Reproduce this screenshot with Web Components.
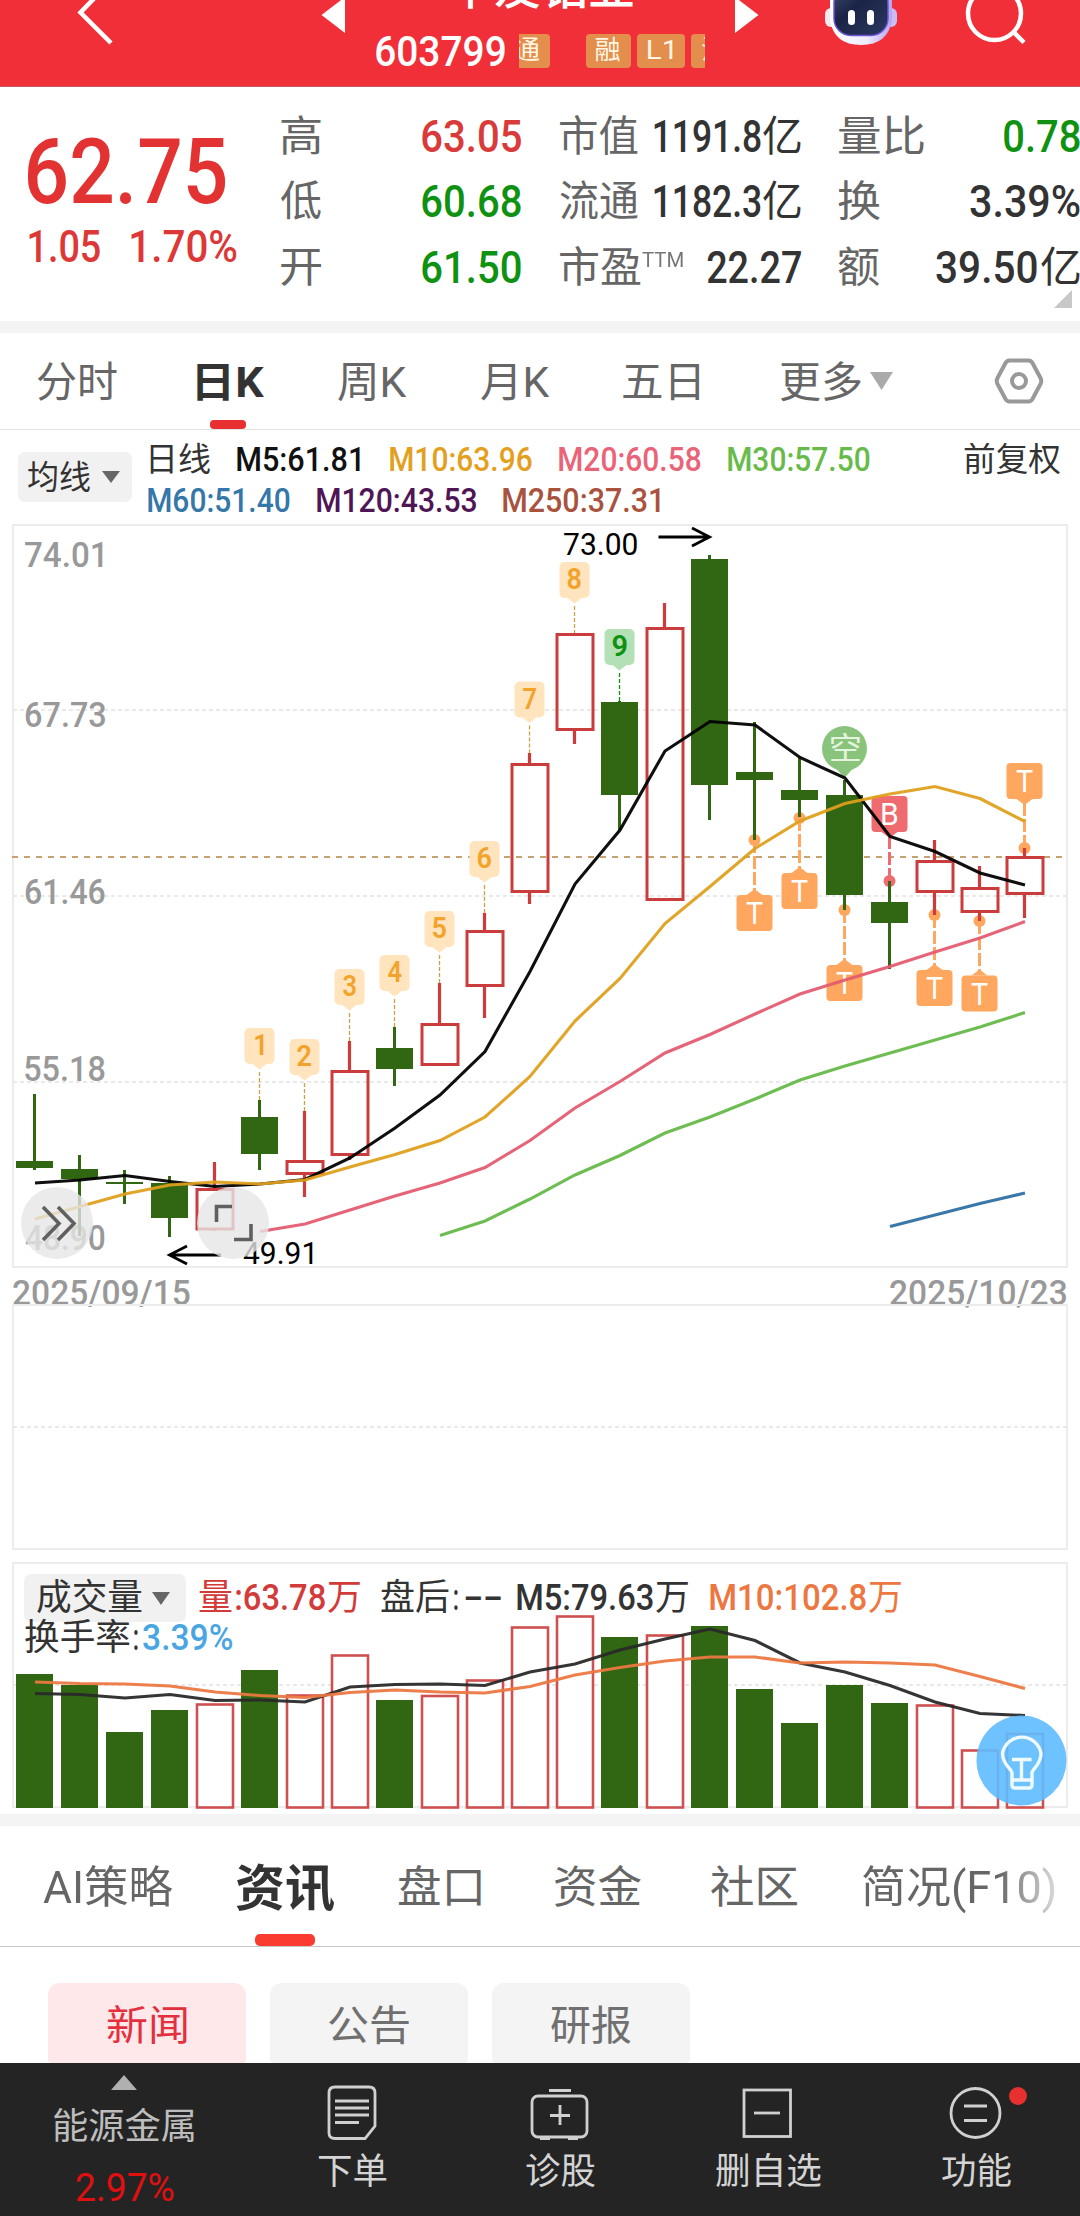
<!DOCTYPE html>
<html lang="zh-CN">
<head>
<meta charset="utf-8">
<title>603799</title>
<style>
html,body{margin:0;padding:0;background:#fff}
body{width:1080px;height:2216px;overflow:hidden;font-family:Roboto,"Noto Sans CJK SC",sans-serif;color:#333}
</style>
</head>
<body>
<stock-app></stock-app>
<script>
const FAMILY = 'Roboto,"Noto Sans CJK SC",sans-serif';
const ctx = document.createElement('canvas').getContext('2d');
function ink(text, weight, size) {
  ctx.font = `${weight} ${size}px ${FAMILY}`;
  const m = ctx.measureText(text);
  return { left: -m.actualBoundingBoxLeft, width: m.actualBoundingBoxLeft + m.actualBoundingBoxRight };
}
class Base extends HTMLElement {
  constructor() { super(); this.attachShadow({ mode: 'open' }); }
  connectedCallback() {
    this.shadowRoot.innerHTML = `<style>:host{display:block;box-sizing:border-box}*{box-sizing:border-box}.r{display:flex;align-items:center}svg{display:block}${this.css ? this.css() : ''}</style>${this.html()}`;
  }
}
/* One line of text whose visible glyphs fill exactly w pixels. */
class FitText extends HTMLElement {
  constructor() {
    super();
    this.attachShadow({ mode: 'open' }).innerHTML = '<style>:host{display:block;flex:none;white-space:nowrap}span{display:inline-block;transform-origin:0 50%}</style><span><slot></slot></span>';
  }
  connectedCallback() {
    const cs = getComputedStyle(this), w = +this.getAttribute('w');
    const b = ink(this.textContent, cs.fontWeight, parseFloat(cs.fontSize));
    const k = w / b.width;
    this.style.width = w + 'px';
    this.shadowRoot.querySelector('span').style.transform = `translateX(${-b.left * k}px) scaleX(${k})`;
  }
}
customElements.define('fit-text', FitText);
const f = (t, w, ml = 0, c = '', extra = '') => `<fit-text w="${w}" class="${c}" style="margin-left:${ml}px;${extra}">${t}</fit-text>`;
/* SVG text between x1 and x2 on the given baseline. */
function st(t, x1, x2, y, size, fill, weight = 400) {
  const b = ink(t, weight, size), k = (x2 - x1) / b.width;
  return `<text transform="translate(${x1 - b.left * k} ${y}) scale(${k} 1)" font-size="${size}" font-weight="${weight}" fill="${fill}" style="white-space:pre">${t}</text>`;
}

customElements.define('stock-header', class extends Base {
  css() { return `:host{height:87px;background:#f12f38;overflow:hidden;color:#fff;border-bottom:1px solid #c8585e}
    .bar{display:grid;grid-template-columns:320px 446px 314px;height:87px}
    .mid{display:grid;grid-template-columns:26px 389px 31px}
    .name{font-size:46px;line-height:46px;font-weight:500;height:34px;overflow:hidden;padding-left:102px}
    .name fit-text{margin-top:-35px}
    .code{font-size:42px;line-height:36px;font-weight:500;height:34px}
    .tags{display:flex;width:186px;height:34px;overflow:hidden;margin-left:14px}
    .tag{flex:none;background:#e38e4d;color:#fff6e4;border-radius:4px;font-size:26px;line-height:32px;display:flex;justify-content:center}`; }
  html() { return `<div class="bar">
    <svg width="320" height="87"><path d="M111 43L80.5 12.5L110-18" fill="none" stroke="#fff" stroke-width="4.5"/></svg>
    <div class="mid"><svg width="26" height="40"><path d="M1.5 15L25-3V33Z" fill="#fff"/></svg>
      <div><div class="name">${f('华友钴业', 185)}</div>
      <div class="r" style="padding-left:30px"><div class="code">${f('603799', 129)}</div>
      <div class="tags"><div class="tag" style="width:45px;margin-left:-14.5px">${f('通', 26)}</div><div class="tag" style="width:45px;margin-left:36px">${f('融', 25)}</div><div class="tag" style="width:48px;margin-left:6px">${f('L1', 25)}</div><div class="tag" style="width:45px;margin-left:6px">${f('沪', 25)}</div></div></div></div>
      <svg width="26" height="40"><path d="M0-3V33L23.5 15Z" fill="#fff"/></svg></div>
    <svg width="314" height="87" viewBox="766 0 314 87">
      <defs><linearGradient id="g" x1="0" x2="1"><stop offset="0" stop-color="#fff"/><stop offset=".6" stop-color="#eeebfb"/><stop offset="1" stop-color="#b5a5ef"/></linearGradient>
      <linearGradient id="v" x1="0" x2="1" y1="0" y2="1"><stop offset="0" stop-color="#3d4a6b"/><stop offset=".4" stop-color="#1a2446"/><stop offset="1" stop-color="#2b3860"/></linearGradient></defs>
      <rect x="825" y="8" width="14" height="19" rx="6" fill="#f7e9ef"/><rect x="883" y="8" width="14" height="19" rx="6" fill="#c9bdf2"/>
      <path d="M830-6V20Q834 45 861 45Q888 45 892 20V-6Z" fill="url(#g)"/>
      <rect x="834" y="-14" width="54" height="49.5" rx="17" fill="url(#v)" stroke="#6d54d6" stroke-width="1.5"/>
      <rect x="848" y="10" width="7" height="15" rx="3.5" fill="#fff"/><rect x="867" y="10" width="7" height="15" rx="3.5" fill="#fff"/>
      <circle cx="994.500" cy="13.500" r="26.500" fill="none" stroke="#fff" stroke-width="4.500"/><path d="M1013 31.500L1024 42.500" stroke="#fff" stroke-width="4.500"/>
    </svg></div>`; }
});

customElements.define('quote-panel', class extends Base {
  css() { return `:host{height:246px;border-bottom:12px solid #f4f4f4;overflow:hidden}
    .g{display:grid;grid-template-columns:280px 241px 280px 279px;height:234px}
    .c{padding-top:17px}.p{padding:39px 0 0 28px;color:#e33232}
    .c .r{height:65.5px;font-size:45px;line-height:60px;font-weight:500}
    .c .r span{flex:1}.l{font-size:42px;font-weight:400;color:#666}
    .red{color:#d93a3a}.gr{color:#0f9111}.t{font-size:21px;font-weight:400;color:#777;position:relative;top:-8px}`; }
  html() { const row = (l, lw, v, cls, ml, m = '') => `<div class="r">${f(l, lw, ml, 'l')}${m}<span></span>${v.map((x, i) => f(x[0], x[1], i ? (x[3] || 2) : 0, cls, x[2] || '')).join('')}</div>`;
    const yi = ['亿', 38, 'font-size:42px;font-weight:400'];
    return `<div class="g"><div class="p"><div style="font-size:91px;line-height:92px;font-weight:500">${f('62.75', 198)}</div><div class="r" style="font-size:45px;line-height:50px;font-weight:500;padding-top:3px;margin-top:1px;color:#dc3838">${f('1.05', 71, 1)}${f('1.70%', 106, 31)}</div></div>
    <div class="c">${row('高', 40, [['63.05', 99]], 'red', 1)}${row('低', 41, [['60.68', 99]], 'gr', 0)}${row('开', 40, [['61.50', 99]], 'gr', 1)}</div>
    <div class="c">${row('市值', 78, [['1191.8', 107], yi], 'd', 39)}${row('流通', 78, [['1182.3', 107], yi], 'd', 39)}${row('市盈', 81, [['22.27', 94]], 'd', 39, f('TTM', 41, 1, 't'))}</div>
    <div class="c">${row('量比', 86, [['0.78', 76]], 'gr', 37)}${row('换', 42, [['3.39%', 110]], 'd', 37)}${row('额', 41, [['39.50', 101], ['亿', 39, 'font-size:42px;font-weight:400', 4]], 'd', 37)}<svg width="18" height="18" style="margin:-11px 0 0 253px"><path d="M18 0V18H0Z" fill="#c8c8c8"/></svg></div></div>`; }
});

customElements.define('period-tabs', class extends Base {
  css() { return `:host{height:97px;border-bottom:1px solid #e4e4e4;font-size:42px;line-height:60px;color:#666}
   .r{height:96px}.r>fit-text{padding-top:3px}.on{font-weight:700;color:#333}.tab{display:flex;flex-direction:column;align-items:center;padding-top:20px;height:96px;margin-left:80px}i{width:36px;height:9px;border-radius:4px;background:#e83030;margin:7px 6px 0 0}`; }
  html() { return `<div class="r">${f('分时', 80, 37)}<div class="tab">${f('日K', 67, 0, 'on')}<i></i></div>${f('周K', 69, 74)}${f('月K', 69, 74)}${f('五日', 76, 73)}${f('更多', 81, 81)}
   <svg width="24" height="19" style="margin-left:9px"><path d="M0 0H23L11.500 18Z" fill="#aaa"/></svg>
   <svg width="52" height="50" viewBox="-26 -25 52 50" style="margin-left:99px" fill="none" stroke="#999" stroke-width="4"><path d="M-9.500-20.500H9.500Q12-20.500 13.500-18L21.500-3Q23 0 21.500 3L13.500 18Q12 20.500 9.500 20.500H-9.500Q-12 20.500-13.500 18L-21.500 3Q-23 0-21.500-3L-13.500-18Q-12-20.500-9.500-20.500Z"/><circle r="7"/></svg></div>`; }
});

customElements.define('ma-legend', class extends Base {
  css() { return `:host{height:94px;display:flex;align-items:flex-start;font-size:33px;line-height:41px;font-weight:500;padding-left:18px}
   .b{width:114px;height:50px;margin-top:22px;border-radius:7px;background:#f1f1f1;padding-left:10px}.n{font-weight:400}.q{padding-top:9px}`; }
  html() { return `<div class="b r">${f('均线', 62, 0, 'n')}<svg width="18" height="12" style="margin-left:12px"><path d="M0 0H18L9 12Z" fill="#666"/></svg></div>
   <div class="q"><div class="r">${f('日线', 60, 18, 'n')}${f('M5:61.81', 123, 27, '', 'color:#111')}${f('M10:63.96', 142, 30, '', 'color:#e3a01e')}${f('M20:60.58', 142, 27, '', 'color:#ea6478')}${f('M30:57.50', 142, 27, '', 'color:#68bb4a')}${f('前复权', 96, 94, 'n')}</div>
   <div class="r">${f('M60:51.40', 142, 16, '', 'color:#3477a8')}${f('M120:43.53', 159, 27, '', 'color:#4f1555')}${f('M250:37.31', 157, 27, '', 'color:#a9523e')}</div></div>`; }
});

const cx = i => 34.5 + 45 * i;
const line = (pts, start, color) => `<polyline fill="none" stroke="${color}" stroke-width="3.100" stroke-opacity=".94" points="${pts.map((y, i) => (35 + 45 * (i + start)) + ',' + y).join(' ')}"/>`;
const GREEN = '#316712', RED = '#cb3d3d';

customElements.define('candle-chart', class extends Base {
  css() { return `:host{height:781px}svg{overflow:visible}`; }
  html() {
    const K = [[0,1094,1161,1168,1170],[0,1155,1169,1179,1236],[0,1170,1182,1184,1204],[0,1176,1183,1218,1237],[1,1162,1189.5,1229,1231],[0,1100,1117,1154,1170],[1,1111,1161.5,1173.5,1197],[1,1041,1071.5,1154.5,1160],[0,1027,1048,1069,1086],[1,983,1024.5,1064.5,1064],[1,913,931.5,985.5,1018],[1,753,764.5,891.5,904],[1,634,634.5,729.5,744],[0,701,702,795,830],[1,603,628.5,899.5,899],[0,555,559,785,820],[0,722,772,780,840],[0,758,790,800,817],[0,780,795,895,910],[0,881,902,923,969],[1,840,861.5,891.5,915],[1,866,888.5,911.5,921],[1,848,857.5,893.5,918]];
    let s = '';
    for (const y of [710, 896, 1082]) s += `<path d="M13 ${y}H1067" stroke="#e9e9e9" stroke-width="2" stroke-dasharray="4 3"/>`;
    s += `<path d="M13 525H1067V1267H13Z" fill="none" stroke="#ececec" stroke-width="2"/>`;
    [['74.01', 567], ['67.73', 727], ['61.46', 904], ['55.18', 1081], ['48.90', 1250]].forEach((a, i) => s += st(a[0], 25, i ? 105 : 103, a[1], 35, '#999', 500));
    s += st('2025/09/15', 13, 190, 1305, 35, '#999', 500) + st('2025/10/23', 890, 1066, 1305, 35, '#999', 500);
    s += `<path d="M12 857H1064" stroke="#c6a273" stroke-width="2" stroke-dasharray="6 6"/>`;
    // sequence numbers above the highs
    [[5,1028],[6,1039],[7,969],[8,955],[9,911],[10,841],[11,681.5],[12,562],[13,629]].forEach(([i, y], n) => {
      const g = n === 8, x = cx(i), d = String(n + 1), w = d === '1' ? 9 : 14;
      s += `<path d="M${x} ${y + 44}V${K[i][1]}" stroke="${g ? '#0f9111' : '#c9a24a'}" stroke-width="1.300" stroke-dasharray="4 2"/><rect x="${x - 15}" y="${y}" width="30" height="36" rx="5" fill="${g ? '#b3e0b4' : '#ffe4bd'}"/><path d="M${x - 7} ${y + 36}h14l-7 5.500z" fill="${g ? '#b3e0b4' : '#ffe4bd'}"/>` + st(d, x - w / 2, x + w / 2, y + 27, 29, g ? '#0f9111' : '#f3a32b', 600);
    });
    // trade flags: index, box top, dot y, label
    [[16,895,840],[17,873,818],[18,965,910],[20,970,915],[21,975.5,921],[22,763,848],[19,796,881,'B']].forEach(([i, y, d, t = 'T']) => {
      const c = t === 'B' ? '#ee6c70' : '#ffa65f', x = cx(i), up = d < y;
      s += `<circle cx="${x}" cy="${d}" r="6" fill="${c}"/><path d="M${x} ${d}V${up ? y - 4 : y + 40}" stroke="${c}" stroke-width="3" stroke-dasharray="13 3"/><rect x="${x - 18}" y="${y}" width="36" height="36" rx="4" fill="${c}"/><path d="${up ? `M${x - 8} ${y}h16l-8-6z` : `M${x - 8} ${y + 36}h16l-8 6z`}" fill="${c}"/>` + st(t, x - (t === 'B' ? 7.500 : 8.500), x + 8.500, y + 29, 32, '#fff');
    });
    s += `<path d="M833 765L844.500 778L856 765Z" fill="#8ac47c"/><circle cx="844.500" cy="748.500" r="22.500" fill="#8ac47c"/>` + st('空', 831, 860, 759, 31, '#e4f4df');
    K.forEach(([r, h, t, b, l], i) => {
      const x = cx(i), c = r ? RED : GREEN;
      if (r) s += `<path d="M${x} ${h}V${t}M${x} ${b}V${Math.max(l, b)}" stroke="${c}" stroke-width="3.200"/><rect x="${x - 17.500}" y="${t}" width="36" height="${b - t}" fill="none" stroke="${c}" stroke-width="3"/>`;
      else s += `<path d="M${x} ${h}V${l}" stroke="${c}" stroke-width="3"/><rect x="${x - 18.500}" y="${t}" width="37" height="${b - t}" fill="${c}"/>`;
    });
    s += line([1183,1180,1175.5,1181.5,1186.5,1184,1179.5,1158,1128,1095,1051.5,971.5,884,830,751,721.5,725,757.5,778,836.5,851.5,873,885], 0, '#000');
    s += line([1219,1206.5,1194,1185,1182,1184,1180,1167,1154.5,1140.5,1117,1076.5,1021,978.5,923.5,886.5,848.5,821,803.5,794,786.5,798.5,821.5], 0, '#df9f1c');
    s += line([1231.5,1224,1210,1196,1183,1167.5,1140.5,1108,1081.5,1053,1034.5,1014,994,980,966.5,952,938,921.5], 5, '#e45a6f');
    s += line([1235.5,1221,1199,1175,1155.5,1133,1117,1099,1080,1066,1053,1040,1027,1012.5], 9, '#65b947');
    s += line([1226.5,1215,1203.5,1193], 19, '#2f70a4');
    s += st('73.00', 564, 637, 555, 31, '#000') + st('49.91', 243, 313, 1264, 31, '#000');
    s += `<path d="M658.500 537H709M692 528L709.500 537L692 546M221 1255H170M187 1246L169.500 1255L187 1264" fill="none" stroke="#000" stroke-width="2.800"/>`;
    s += `<g fill="#e6e6e6" fill-opacity=".8"><circle cx="57" cy="1223" r="36"/><circle cx="233" cy="1223" r="36"/></g><path d="M43 1207L59 1223.500L43 1240M58 1207L74 1223.500L58 1240M216.500 1222V1206.500H232M251 1224V1239.500H234" fill="none" stroke="#606060" stroke-width="3.600"/>`;
    return `<svg width="1080" height="781" viewBox="0 524 1080 781">${s}</svg>`;
  }
});

customElements.define('empty-pane', class extends Base {
  css() { return `:host{height:258px}`; }
  html() { return `<svg width="1080" height="258" viewBox="0 1304 1080 258"><path d="M13 1305H1067V1549H13Z" fill="none" stroke="#ececec" stroke-width="2"/><path d="M13 1427H1067" stroke="#e9e9e9" stroke-width="2" stroke-dasharray="4 3"/></svg>`; }
});

customElements.define('volume-pane', class extends Base {
  css() { return `:host{height:264px;border-bottom:12px solid #f4f4f4;display:grid}:host>*{grid-area:1/1}
   .h{padding:12px 0 0 24px;font-size:36px;line-height:48px;font-weight:500;position:relative}.h .r{height:48px}
   .b{width:162px;background:#f1f1f1;border-radius:7px;padding-left:13px;font-weight:400}.n{font-weight:400}`; }
  html() {
    const T = [1674,1685,1732,1710,-1704.5,1670,-1695.5,-1655.5,1700,-1696,-1680.5,-1627.5,-1616.5,1637,-1635.5,1626,1689,1723,1685,1703,-1705.5,-1750.5,-1734];
    let s = `<path d="M13 1563H1067V1807H13Z" fill="none" stroke="#ececec" stroke-width="2"/><path d="M13 1685H1067" stroke="#e9e9e9" stroke-width="2" stroke-dasharray="4 3"/>`;
    T.forEach((t, i) => { const x = cx(i);
      s += t > 0 ? `<rect x="${x - 18.5}" y="${t}" width="37" height="${1808 - t}" fill="${GREEN}"/>` : `<rect x="${x - 17.5}" y="${-t}" width="36" height="${1807.5 + t}" fill="#fff" stroke="#cf5050" stroke-width="2.600"/>`; });
    s += line([1693.5,1694.5,1698,1694.5,1700.5,1700,1702,1687,1684.5,1684,1685.5,1672,1664,1650,1639,1629,1640.5,1663,1672,1685.5,1702,1713.5,1715.5], 0, '#282828');
    s += line([1682,1683.5,1684,1686,1692,1695.5,1697.5,1692.5,1690,1692,1693,1686.5,1675,1667.5,1661,1657,1657,1663,1662,1663,1665,1676.5,1688.5], 0, '#ec7741');
    s += `<circle cx="1021.500" cy="1760.500" r="45" fill="#60bcff" fill-opacity=".91"/><path d="M1012 1780V1773C1012 1769 1002.500 1765 1002.500 1753.500A19.500 19.500 0 0 1 1041 1753.500C1041 1765 1032 1769 1032 1773V1785Q1032 1788 1029 1788H1015Q1012 1788 1012 1785V1780H1032M1021.500 1780V1760M1012 1759.500H1031.500" fill="none" stroke="#effaff" stroke-width="3.400"/>`;
    return `<svg width="1080" height="252" viewBox="0 1562 1080 252">${s}</svg>
    <div class="h"><div class="r"><div class="b r">${f('成交量', 105)}<svg width="18" height="13" style="margin-left:10px"><path d="M0 0H18L9 13Z" fill="#666"/></svg></div>
    ${f('量', 33, 13, 'n', 'color:#d33a3a')}${f(':63.78', 89, 4, '', 'color:#d33a3a')}${f('万', 32, 3, 'n', 'color:#d33a3a')}${f('盘后', 68, 21, 'n')}${f(':', 4, 5)}${f('--', 36, 7)}${f('M5:79.63', 136, 16)}${f('万', 32, 3, 'n')}${f('M10:102.8', 156, 22, '', 'color:#ec7741')}${f('万', 32, 3, 'n', 'color:#ec7741')}</div>
    <div class="r" style="height:30px;line-height:30px;margin-top:1px">${f('换手率', 105, 1, 'n')}${f(':', 4, 4)}${f('3.39%', 89, 5, '', 'color:#4aa6e2')}</div></div>`;
  }
});

customElements.define('info-tabs', class extends Base {
  css() { return `:host{height:121px;border-bottom:1px solid #c8c8c8;font-size:44px;line-height:64px;color:#666}
  .r{height:120px}.r>fit-text{padding-top:4px}.tab{display:flex;flex-direction:column;align-items:center;height:120px;padding-top:31px;margin-left:63px}.on{font-size:50px;font-weight:700;color:#333}
  i{width:60px;height:12px;border-radius:5px;background:#fa3b30;margin-top:13px}
  .fade{-webkit-mask-image:linear-gradient(90deg,#000 70%,rgba(0,0,0,.25));mask-image:linear-gradient(90deg,#000 70%,rgba(0,0,0,.25))}`; }
  html() { return `<div class="r">${f('AI策略', 130, 43)}<div class="tab">${f('资讯', 98, 0, 'on')}<i></i></div>${f('盘口', 83, 64)}${f('资金', 86, 74)}${f('社区', 86, 70)}${f('简况(F10)', 192, 66, 'fade')}</div>`; }
});

customElements.define('news-chips', class extends Base {
  css() { return `:host{height:116px;padding:36px 48px 0;overflow:hidden;display:flex;gap:24px;font-size:41px;line-height:87px;color:#707070}
  div{width:198px;height:80px;border-radius:12px 12px 4px 4px;background:#f4f4f4;display:flex;justify-content:center}.on{background:#ffe8ea;color:#e32f3e}`; }
  html() { return `<div class="on">${f('新闻', 80)}</div><div>${f('公告', 80)}</div><div>${f('研报', 80)}</div>`; }
});

customElements.define('bottom-nav', class extends Base {
  css() { return `:host{height:153px;background:#242424;color:#d4d4d4;display:grid;grid-template-columns:248px repeat(4,208px);font-size:36px;line-height:44px}
  .c{display:flex;flex-direction:column;align-items:center;padding-top:20px;height:153px}.c fit-text{padding-top:7px}svg{fill:none;stroke:#d0d0d0;stroke-width:2.8;overflow:visible}`; }
  html() { const c = (p, t, w) => `<div class="c"><svg width="60" height="60" viewBox="-30 -30 60 60">${p}</svg>${f(t, w)}</div>`;
    return `<div class="c" style="padding-top:12px"><svg width="26" height="15" style="stroke:none;fill:#b0b0b0"><path d="M13 0L26 15H0Z"/></svg>${f('能源金属', 140, 0, '', 'margin-top:8px;color:#bdbdbd')}${f('2.97%', 98, 2, '', 'margin-top:10px;color:#e01010;font-size:38px')}</div>
    ${c('<path d="M-17-26H17Q23-26 23-20V13L13 25.500H-17Q-23 25.500-23 20V-20Q-23-26-17-26ZM-17-12H17M-17-5H17M-17 2H17M-17 9.500H7"/>', '下单', 69)}
    ${c('<rect x="-28" y="-17" width="55" height="41" rx="6"/><path d="M-11-22.500H11M-20 25.500H-10M8 25.500H18M0-8V12M-10 2.500H10"/>', '诊股', 69)}
    ${c('<rect x="-24" y="-23" width="46.500" height="46.500"/><path d="M-14 0H12"/>', '删自选', 105)}
    ${c('<circle cx="-.5" cy="0" r="24.500"/><path d="M-12-7H11M-12 7.500H11"/><circle cx="42" cy="-17" r="9" fill="#e83030" stroke="none"/>', '功能', 69)}`; }
});

customElements.define('stock-app', class extends Base {
  css() { return `:host{width:1080px;height:2216px;overflow:hidden;background:#fff;display:flex;flex-direction:column}:host>*{flex:none}`; }
  html() { return `<stock-header></stock-header><quote-panel></quote-panel><period-tabs></period-tabs><ma-legend></ma-legend><candle-chart></candle-chart><empty-pane style="margin-top:-1px"></empty-pane><volume-pane></volume-pane><info-tabs></info-tabs><news-chips></news-chips><bottom-nav></bottom-nav>`; }
});
</script>
</body>
</html>
